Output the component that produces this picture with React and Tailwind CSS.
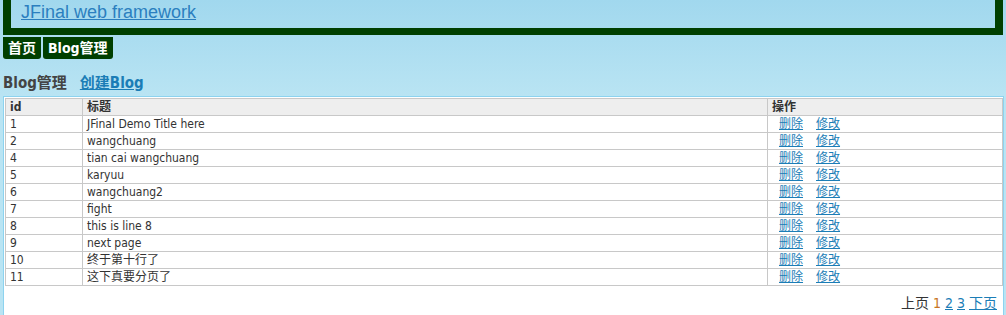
const blogs = [
  { id: 1, title: 'JFinal Demo Title here' },
  { id: 2, title: 'wangchuang' },
  { id: 4, title: 'tian cai wangchuang' },
  { id: 5, title: 'karyuu' },
  { id: 6, title: 'wangchuang2' },
  { id: 7, title: 'fight' },
  { id: 8, title: 'this is line 8' },
  { id: 9, title: 'next page' },
  { id: 10, title: '终于第十行了' },
  { id: 11, title: '这下真要分页了' },
];

const font = "font-['Tahoma','DejaVu_Sans_Condensed','Noto_Sans_CJK_SC',sans-serif]";

export default function App() {
  return (
    <div className={`min-h-[315px] bg-[linear-gradient(to_bottom,#a1d8ee_0px,#b9e4f3_96px,#b9e4f3_100%)] ${font} text-[12px] text-[#333]`}>
      {/* Header */}
      <div className="ml-[3px] w-[1000px] h-[35px] border-x-8 border-b-[7px] border-[#003f00] pl-[10px] pt-[1px]">
        <a href="#" className="font-['Liberation_Sans',Arial,sans-serif] text-[18px] leading-[22px] text-[#2b7fbf] underline">
          JFinal web framework
        </a>
      </div>

      {/* Menu */}
      <div className="flex gap-[2px] ml-[3px] mt-[2px]">
        <a href="#" className="h-[22px] px-[5px] bg-[#003f00] rounded-b-[3px] text-white font-bold text-[14px] leading-[22px]">首页</a>
        <a href="#" className="h-[22px] px-[5px] bg-[#003f00] rounded-b-[3px] text-white font-bold text-[14px] leading-[22px]">Blog管理</a>
      </div>

      {/* Title */}
      <div className="flex items-center gap-[13px] ml-[3px] mt-[14px] h-[20px] text-[15px] font-bold">
        <span className="text-[#444]">Blog管理</span>
        <a href="#" className="text-[#1b7db6] underline">创建Blog</a>
      </div>

      {/* Table box */}
      <div className="ml-[3px] mt-[3px] w-[1001px] min-h-[219px] border border-[#8dd3ef] border-b-0 bg-white p-[1px]">
        <table className="w-[997px] border-collapse table-fixed">
          <colgroup>
            <col className="w-[77px]" />
            <col className="w-[685px]" />
            <col className="w-[235px]" />
          </colgroup>
          <thead>
            <tr className="bg-[#eeeeee] h-[17px]">
              <th className="border border-[#c8c8c8] px-[4px] text-left font-bold leading-[15px]">id</th>
              <th className="border border-[#c8c8c8] px-[4px] text-left font-bold leading-[15px]">标题</th>
              <th className="border border-[#c8c8c8] px-[4px] text-left font-bold leading-[15px]">操作</th>
            </tr>
          </thead>
          <tbody>
            {blogs.map((b) => (
              <tr key={b.id} className="h-[17px]">
                <td className="border border-[#c8c8c8] px-[4px] leading-[16px]">{b.id}</td>
                <td className="border border-[#c8c8c8] px-[4px] leading-[16px]">{b.title}</td>
                <td className="border border-[#c8c8c8] px-[4px] leading-[16px]">
                  <a href="#" className="ml-[7px] text-[#1b7db6] underline">删除</a>
                  <a href="#" className="ml-[13px] text-[#1b7db6] underline">修改</a>
                </td>
              </tr>
            ))}
          </tbody>
        </table>

        <div className="flex justify-end gap-[4px] pr-[5px] mt-[8px] text-[14px] leading-[18px] text-[#333]">
          <span>上页</span>
          <span className="text-[#c87422]">1</span>
          <a href="#" className="text-[#1b7db6] underline">2</a>
          <a href="#" className="text-[#1b7db6] underline">3</a>
          <a href="#" className="text-[#1b7db6] underline">下页</a>
        </div>
      </div>
    </div>
  );
}
